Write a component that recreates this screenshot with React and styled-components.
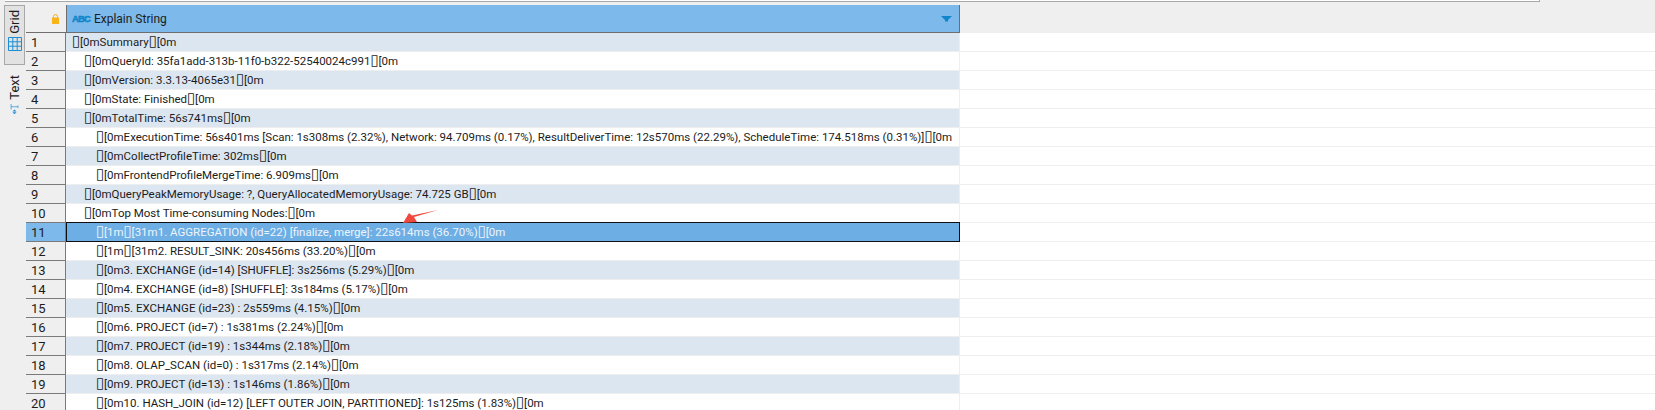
import React from "react";
import styled, { createGlobalStyle } from "styled-components";

const GlobalStyle = createGlobalStyle`
  html, body {
    margin: 0;
    padding: 0;
    background: #efefef;
    overflow: hidden;
  }
`;

const Page = styled.div`
  position: relative;
  width: 1655px;
  height: 410px;
  overflow: hidden;
  background: #efefef;
  font-family: Roboto, "Open Sans", sans-serif;
  font-size: 11.5px;
  color: #1c1c1c;
`;

const TopStrip = styled.div`
  box-sizing: border-box;
  width: 1535px;
  height: 2px;
  margin-left: 5px;
  border-bottom: 1px solid #a8a8a8;
  border-right: 1px solid #a8a8a8;
  background: #fff;
`;

const Main = styled.div`
  display: flex;
  padding-top: 3px;
`;

const Sidebar = styled.div`
  width: 26px;
  flex: none;
  padding-left: 4px;
  box-sizing: border-box;
  display: flex;
  flex-direction: column;
`;

const Tab = styled.div`
  box-sizing: border-box;
  width: 21px;
  height: ${(p) => p.$height}px;
  padding-top: ${(p) => p.$pad}px;
  display: flex;
  flex-direction: column;
  align-items: center;
  gap: ${(p) => p.$gap}px;
  background: ${(p) => (p.$active ? "#e2e2e2" : "transparent")};
  border: 1px solid ${(p) => (p.$active ? "#a8a8a8" : "transparent")};
`;

const TabLabel = styled.span`
  writing-mode: vertical-rl;
  transform: rotate(180deg);
  font-size: 13px;
  line-height: 14px;
`;

const Grid = styled.div`
  flex: 1;
  min-width: 0;
`;

const HeaderRow = styled.div`
  display: flex;
  height: 28px;
`;

const Corner = styled.div`
  box-sizing: border-box;
  width: 40px;
  flex: none;
  padding: 9px 0 0 26px;
  border-bottom: 1px solid #6e6e6e;
`;

const ColumnHeader = styled.div`
  box-sizing: border-box;
  width: 894px;
  flex: none;
  display: flex;
  align-items: center;
  gap: 4px;
  padding: 0 7px 0 5px;
  background: #7db9ea;
  border-left: 1px solid #6e6e6e;
  border-right: 1px solid #6e6e6e;
  border-bottom: 1px solid #6e6e6e;
  font-size: 12px;
`;

const TypeBadge = styled.span`
  font-family: "Liberation Sans", Arial, sans-serif;
  font-size: 9.5px;
  font-weight: 700;
  letter-spacing: -0.9px;
  color: #0f86cc;
  -webkit-text-stroke: 0.5px #0f86cc;
`;

const SortArrow = styled.svg`
  margin-left: auto;
`;

const Row = styled.div`
  display: flex;
  height: 19px;
`;

const RowNumber = styled.div`
  box-sizing: border-box;
  width: 40px;
  flex: none;
  padding-left: 5px;
  line-height: 19px;
  font-size: 13px;
  background: ${(p) => (p.$selected ? "#7db9ea" : "#efefef")};
  border-bottom: 1px solid #7a7a7a;
  border-right: 1px solid #7a7a7a;
`;

const Cell = styled.div`
  box-sizing: border-box;
  width: 894px;
  flex: none;
  padding-left: ${(p) => (p.$selected ? 5 : 6) + p.$indent * 12}px;
  line-height: 18px;
  white-space: nowrap;
  overflow: hidden;
  color: ${(p) => (p.$selected ? "#eef5fb" : "inherit")};
  background: ${(p) =>
    p.$selected ? "#6daee5" : p.$odd ? "#dce6f1" : "#fff"};
  border: ${(p) => (p.$selected ? "1px solid #101010" : "none")};
  border-right: 1px solid ${(p) => (p.$selected ? "#101010" : "#eeeeee")};
  border-bottom: 1px solid ${(p) => (p.$selected ? "#101010" : "#eeeeee")};
  margin-top: ${(p) => (p.$selected ? "-1px" : "0")};
  height: ${(p) => (p.$selected ? "20px" : "19px")};
`;

const Filler = styled.div`
  flex: 1;
  background: #fff;
  border-bottom: 1px solid #eeeeee;
`;

const Tofu = styled.span`
  display: inline-block;
  width: 8px;
  text-align: center;
  font-family: "DejaVu Sans", sans-serif;
  font-size: 15px;
  line-height: 0;
`;

const ArrowMark = styled.svg`
  position: absolute;
  left: 400px;
  top: 206px;
`;

const rows = [
  [0, "[0mSummary|[0m"],
  [1, "[0mQueryId: 35fa1add-313b-11f0-b322-52540024c991|[0m"],
  [1, "[0mVersion: 3.3.13-4065e31|[0m"],
  [1, "[0mState: Finished|[0m"],
  [1, "[0mTotalTime: 56s741ms|[0m"],
  [2, "[0mExecutionTime: 56s401ms [Scan: 1s308ms (2.32%), Network: 94.709ms (0.17%), ResultDeliverTime: 12s570ms (22.29%), ScheduleTime: 174.518ms (0.31%)]|[0m"],
  [2, "[0mCollectProfileTime: 302ms|[0m"],
  [2, "[0mFrontendProfileMergeTime: 6.909ms|[0m"],
  [1, "[0mQueryPeakMemoryUsage: ?, QueryAllocatedMemoryUsage: 74.725 GB|[0m"],
  [1, "[0mTop Most Time-consuming Nodes:|[0m"],
  [2, "[1m|[31m1. AGGREGATION (id=22) [finalize, merge]: 22s614ms (36.70%)|[0m"],
  [2, "[1m|[31m2. RESULT_SINK: 20s456ms (33.20%)|[0m"],
  [2, "[0m3. EXCHANGE (id=14) [SHUFFLE]: 3s256ms (5.29%)|[0m"],
  [2, "[0m4. EXCHANGE (id=8) [SHUFFLE]: 3s184ms (5.17%)|[0m"],
  [2, "[0m5. EXCHANGE (id=23) : 2s559ms (4.15%)|[0m"],
  [2, "[0m6. PROJECT (id=7) : 1s381ms (2.24%)|[0m"],
  [2, "[0m7. PROJECT (id=19) : 1s344ms (2.18%)|[0m"],
  [2, "[0m8. OLAP_SCAN (id=0) : 1s317ms (2.14%)|[0m"],
  [2, "[0m9. PROJECT (id=13) : 1s146ms (1.86%)|[0m"],
  [2, "[0m10. HASH_JOIN (id=12) [LEFT OUTER JOIN, PARTITIONED]: 1s125ms (1.83%)|[0m"],
];

// the log's ESC bytes show up as empty boxes in the grid
function LogText({ text }) {
  const parts = ("|" + text).split("|");
  return parts.map((part, i) => (
    <React.Fragment key={i}>
      {i > 0 && <Tofu>{"\u25af"}</Tofu>}
      {part}
    </React.Fragment>
  ));
}

function GridIcon() {
  return (
    <svg width="14" height="14" viewBox="0 0 14 14" fill="none" stroke="#1a8fd6">
      <path d="M.5.5h13v13H.5zM.5 4.8h13M.5 9.2h13M4.8.5v13M9.2.5v13" />
    </svg>
  );
}

// sideways T over a small up/down arrow pair
function TextIcon() {
  return (
    <svg width="11" height="15" viewBox="0 0 11 15">
      <path d="M.5 0v8M.5 4h10M10.5 2v4" fill="none" stroke="#1a8fd6" />
      <path d="M5.5 8l3 3h-6zM2.5 12h6l-3 3z" fill="#1a8fd6" />
    </svg>
  );
}

function LockIcon() {
  return (
    <svg width="7" height="10" viewBox="0 0 7 10" style={{ display: "block" }}>
      <path d="M1.5 4V2.5a2 2 0 0 1 4 0V4" fill="none" stroke="#f0b030" />
      <rect x="0" y="3.5" width="7" height="6.5" fill="#f8b418" />
    </svg>
  );
}

export default function App() {
  return (
    <Page>
      <GlobalStyle />
      <TopStrip />
      <Main>
        <Sidebar>
          <Tab $active $height={60} $pad={4} $gap={3}>
            <TabLabel>Grid</TabLabel>
            <GridIcon />
          </Tab>
          <Tab $height={50} $pad={9} $gap={4}>
            <TabLabel>Text</TabLabel>
            <TextIcon />
          </Tab>
        </Sidebar>
        <Grid>
          <HeaderRow>
            <Corner>
              <LockIcon />
            </Corner>
            <ColumnHeader>
              <TypeBadge>ABC</TypeBadge>
              Explain String
              <SortArrow width="11" height="6" viewBox="0 0 11 6">
                <path d="M0 0h11L7 4v1.5H4V4z" fill="#0f86cc" />
              </SortArrow>
            </ColumnHeader>
          </HeaderRow>
          {rows.map(([indent, text], i) => {
            const selected = i === 10;
            return (
              <Row key={i}>
                <RowNumber $selected={selected}>{i + 1}</RowNumber>
                <Cell $indent={indent} $odd={i % 2 === 0} $selected={selected}>
                  <LogText text={text} />
                </Cell>
                <Filler />
              </Row>
            );
          })}
        </Grid>
      </Main>
      <ArrowMark width="40" height="20" viewBox="0 0 40 20">
        <path d="M38 4 L14 11 L17 16 L3 17 L9 7 L12 9.5 Z" fill="#ef4a3f" />
      </ArrowMark>
    </Page>
  );
}
